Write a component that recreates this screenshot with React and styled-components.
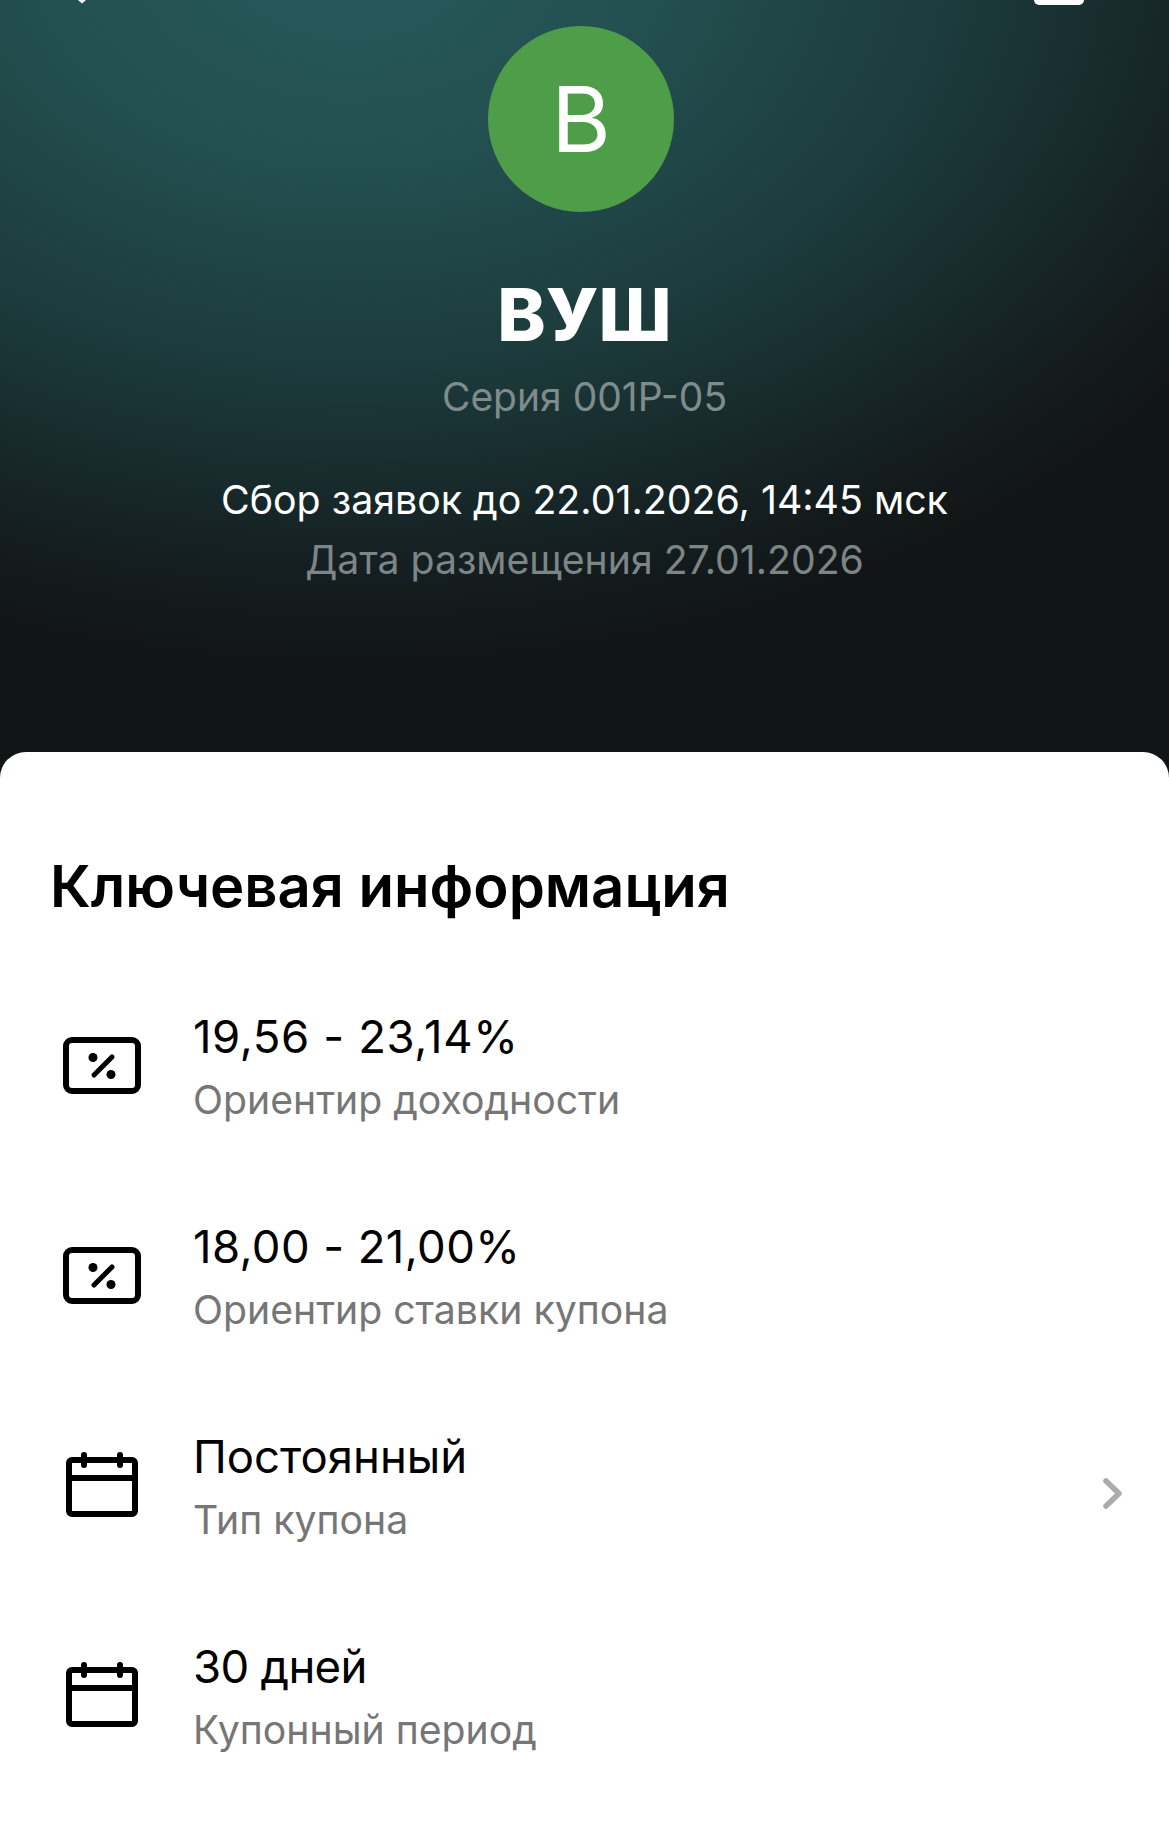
import styled, { createGlobalStyle } from 'styled-components';

const Global = createGlobalStyle`
    html, body {
        margin: 0;
        padding: 0;
        background: #fff;
    }
`;

const Page = styled.div`
    width: 1169px;
    height: 1826px;
    overflow: hidden;
    font-family: "Inter", "Noto Sans", sans-serif;
    background: #121516;
`;

const Hero = styled.header`
    position: relative;
    height: 752px;
    box-sizing: border-box;
    padding-top: 26px;
    display: flex;
    flex-direction: column;
    align-items: center;
    background:
        radial-gradient(ellipse 1040px 710px at 30% -6%, #285a5b 0%, #234f50 30%, #1c3b3c 58%, #141d1f 88%, #121516 100%);
`;

const BackTip = styled.svg`
    position: absolute;
    left: 75px;
    top: 0;
`;

const TopBadge = styled.div`
    position: absolute;
    left: 1034px;
    top: 0;
    width: 50px;
    height: 5px;
    background: #fff;
    border-radius: 0 0 5px 5px;
`;

const Avatar = styled.div`
    width: 186px;
    height: 186px;
    margin-right: 7px;
    border-radius: 50%;
    background: #4e9d48;
    color: #fff;
    display: flex;
    align-items: center;
    justify-content: center;
    font-size: 91px;
    font-weight: 400;
`;

const Title = styled.h1`
    margin: 65px 0 0;
    font-size: 73px;
    line-height: 76px;
    font-weight: 800;
    color: #fff;
`;

const Series = styled.div`
    margin-top: 21px;
    font-size: 39px;
    line-height: 46px;
    color: #7f8c8c;
`;

const Deadline = styled.div`
    margin-top: 57px;
    font-size: 39.3px;
    line-height: 46px;
    color: #fff;
`;

const Placement = styled.div`
    margin-top: 14px;
    font-size: 39.2px;
    line-height: 46px;
    color: #7c8687;
`;

const Sheet = styled.section`
    height: 1074px;
    box-sizing: border-box;
    background: #fff;
    border-radius: 26px 26px 0 0;
    padding: 101px 47px 0 50px;
`;

const Heading = styled.h2`
    margin: 0 0 72px;
    font-size: 58px;
    line-height: 66px;
    font-weight: 600;
    color: #000;
`;

const List = styled.div`
    display: flex;
    flex-direction: column;
    gap: 60px;
`;

const Row = styled.div`
    display: flex;
    align-items: center;
    height: 150px;
`;

const IconBox = styled.div`
    width: 143px;
    flex: none;
    display: flex;
    padding-left: 12px;
    box-sizing: border-box;
`;

const Texts = styled.div`
    flex: 1;
`;

const Value = styled.div`
    font-size: 45.5px;
    line-height: 54px;
    letter-spacing: ${(props) => props.$spacing || 0}px;
    color: #000;
`;

const Label = styled.div`
    margin-top: 13px;
    font-size: 39.2px;
    line-height: 46px;
    color: #767676;
`;

const ChevronIcon = styled.svg`
    flex: none;
    margin-top: 14px;
`;

const PercentIcon = () => (
    <svg width="80" height="60" viewBox="0 0 80 60" fill="none" stroke="#000">
        <rect x="4" y="4" width="72" height="51" rx="6" strokeWidth="6" />
        <path d="M32 39 L50 21" strokeWidth="5" strokeLinecap="round" />
        <circle cx="31" cy="21.5" r="4.5" fill="#000" stroke="none" />
        <circle cx="49" cy="38.5" r="4.5" fill="#000" stroke="none" />
    </svg>
);

const CalendarIcon = () => (
    <svg width="80" height="70" viewBox="0 0 80 70" fill="none" stroke="#000">
        <rect x="7" y="9" width="66" height="54" rx="3" strokeWidth="6" />
        <path d="M7 27 H73" strokeWidth="6" />
        <path d="M22 4 V14 M58 4 V14" strokeWidth="6" strokeLinecap="round" />
    </svg>
);

const Chevron = () => (
    <ChevronIcon width="19" height="31" viewBox="0 0 19 31" fill="none" stroke="#ababab" strokeWidth="5.5" strokeLinecap="round" strokeLinejoin="round">
        <path d="M3 3 L16 15.5 L3 28" />
    </ChevronIcon>
);

const rows = [
    { icon: <PercentIcon />, value: '19,56 - 23,14%', label: 'Ориентир доходности', spacing: 0.6 },
    { icon: <PercentIcon />, value: '18,00 - 21,00%', label: 'Ориентир ставки купона', spacing: 0.4 },
    { icon: <CalendarIcon />, value: 'Постоянный', label: 'Тип купона', more: true },
    { icon: <CalendarIcon />, value: '30 дней', label: 'Купонный период', spacing: -0.7 },
];

const App = () => (
    <Page>
        <Global />
        <Hero>
            <BackTip width="14" height="5" viewBox="0 0 14 5">
                <path d="M3 0 L7 3.5 L11 0 Z" fill="#fff" />
            </BackTip>
            <TopBadge />
            <Avatar>B</Avatar>
            <Title>ВУШ</Title>
            <Series>Серия 001Р-05</Series>
            <Deadline>Сбор заявок до 22.01.2026, 14:45 мск</Deadline>
            <Placement>Дата размещения 27.01.2026</Placement>
        </Hero>
        <Sheet>
            <Heading>Ключевая информация</Heading>
            <List>
                {rows.map((row) => (
                    <Row key={row.label}>
                        <IconBox>{row.icon}</IconBox>
                        <Texts>
                            <Value $spacing={row.spacing}>{row.value}</Value>
                            <Label>{row.label}</Label>
                        </Texts>
                        {row.more ? <Chevron /> : null}
                    </Row>
                ))}
            </List>
        </Sheet>
    </Page>
);

export default App;
